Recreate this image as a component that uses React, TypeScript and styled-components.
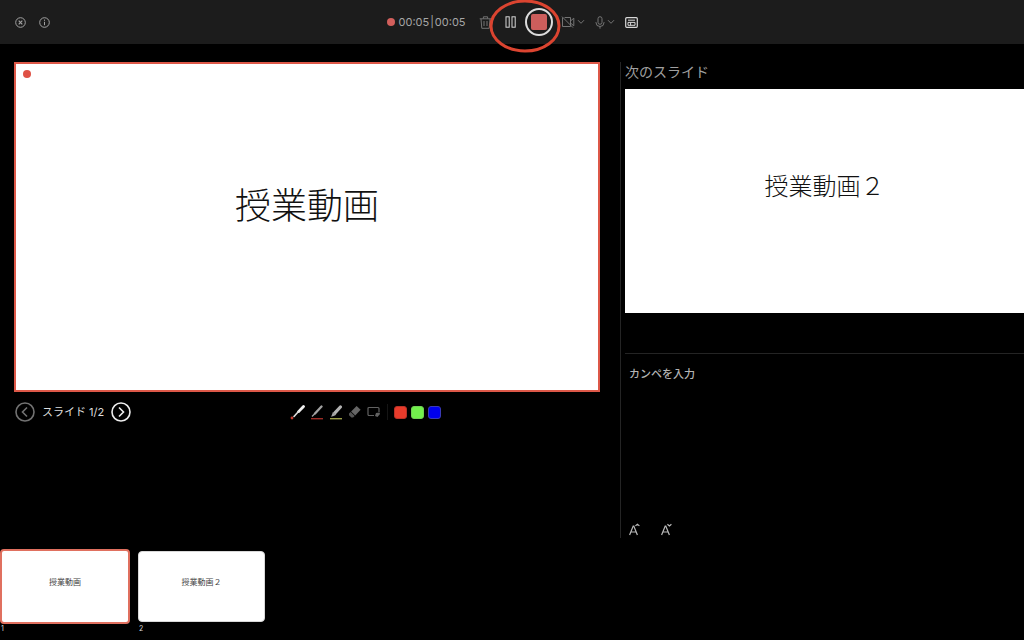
import React from "react";
import styled, { createGlobalStyle } from "styled-components";

const GlobalStyle = createGlobalStyle`
  * { box-sizing: border-box; }
  body {
    margin: 0;
    background: #000;
    color: #d8d8d8;
    font-family: Inter, "Noto Sans CJK JP", sans-serif;
  }
`;

const Page = styled.div`
  display: flex;
  flex-direction: column;
  min-height: 100vh;
`;

const TopBar = styled.header`
  display: grid;
  grid-template-columns: 1fr auto 1fr;
  align-items: center;
  height: 44px;
  padding: 0 15px;
  background: #1c1c1c;
`;

const Group = styled.div<{ $gap: number }>`
  display: flex;
  align-items: center;
  gap: ${(p) => p.$gap}px;
`;

const IconButton = styled.button<{ $color?: string }>`
  display: flex;
  align-items: center;
  padding: 0;
  border: 0;
  background: none;
  color: ${(p) => p.$color ?? "#d8d8d8"};
  cursor: pointer;
  svg { display: block; }
`;

const Recorder = styled.div`
  position: relative;
  display: flex;
  align-items: center;
`;

const Dot = styled.span`
  width: 8px;
  height: 8px;
  border-radius: 50%;
  background: #d25f5c;
`;

const Timer = styled.span`
  display: flex;
  gap: 1px;
  width: 66px;
  margin: 0 14px 0 4px;
  font-size: 11px;
  line-height: 16px;
  color: #a6a6a6;
  white-space: nowrap;
`;

const Controls = styled.div`
  position: relative;
  display: flex;
  align-items: center;
  gap: 8px;
  margin: 0 8px 0 13px;
`;

const StopButton = styled.button`
  display: grid;
  place-items: center;
  width: 28px;
  height: 28px;
  padding: 0;
  border: 2px solid #dcdcdc;
  border-radius: 50%;
  background: none;
  cursor: pointer;
`;

const StopMark = styled.span`
  width: 16px;
  height: 16px;
  border-radius: 2px;
  background: #cd5e5c;
`;

const Highlight = styled.svg`
  position: absolute;
  left: -16px;
  top: -10px;
  pointer-events: none;
`;

const Main = styled.main`
  display: grid;
  grid-template-columns: minmax(0, 586fr) minmax(0, 404fr);
  gap: 20px;
  padding: 18px 0 0 14px;
`;

const Column = styled.section`
  display: flex;
  flex-direction: column;
`;

const CurrentSlide = styled.div`
  position: relative;
  display: flex;
  justify-content: center;
  aspect-ratio: 586 / 330;
  padding-top: calc(20% + 4px);
  border: 2px solid #dd5848;
  background: #fff;
`;

const RecordingMark = styled.span`
  position: absolute;
  left: 7px;
  top: 6px;
  width: 8px;
  height: 8px;
  border-radius: 50%;
  background: #df5145;
`;

const SlideTitle = styled.h1<{ $size: number }>`
  margin: 0;
  color: #111;
  font-family: "Noto Sans CJK JP", sans-serif;
  font-size: ${(p) => p.$size}px;
  font-weight: 300;
  line-height: 1;
  white-space: nowrap;
`;

const SlideBar = styled.div`
  display: flex;
  align-items: center;
  height: 40px;
  padding: 0 1px;
`;

const InkTools = styled.div`
  display: flex;
  align-items: center;
  gap: 4px;
  margin: 0 auto;
`;

const Counter = styled.span`
  font-size: 11px;
  line-height: 16px;
  color: #dedede;
`;

const ToolDivider = styled.span`
  width: 1px;
  height: 16px;
  margin: 0 2px;
  background: #151515;
`;

const Swatch = styled.button<{ $color: string; $edge: string }>`
  width: 13px;
  height: 13px;
  padding: 0;
  border: 1px solid ${(p) => p.$edge};
  border-radius: 3px;
  background: ${(p) => p.$color};
  cursor: pointer;
`;

const Side = styled(Column)`
  min-height: 476px;
  padding-left: 4px;
  border-left: 1px solid #242424;
`;

const SideHeading = styled.h2`
  margin: 0 0 7px;
  font-size: 14px;
  font-weight: 400;
  line-height: 20px;
  color: #a0a0a0;
`;

const NextSlide = styled.div`
  display: flex;
  justify-content: center;
  aspect-ratio: 399 / 224;
  padding-top: 21%;
  background: #fff;
`;

const Notes = styled.div`
  display: flex;
  flex: 1;
  flex-direction: column;
  margin-top: 40px;
  padding: 12px 4px 2px;
  border-top: 1px solid #242424;
`;

const NotesInput = styled.textarea`
  flex: 1;
  padding: 0;
  border: 0;
  outline: 0;
  resize: none;
  background: none;
  color: #b4b4b4;
  font: 500 11px/16px Inter, "Noto Sans CJK JP", sans-serif;
  &::placeholder { color: #b4b4b4; opacity: 1; }
`;

const Strip = styled.nav`
  display: flex;
  gap: 8px;
  margin-top: 11px;
`;

const Thumb = styled.button`
  padding: 0;
  border: 0;
  background: none;
  text-align: left;
  cursor: pointer;
`;

const ThumbPage = styled.span<{ $active?: boolean }>`
  display: flex;
  justify-content: center;
  width: ${(p) => (p.$active ? 130 : 127)}px;
  height: ${(p) => (p.$active ? 75 : 71)}px;
  margin: ${(p) => (p.$active ? 0 : 2)}px 0;
  padding-top: ${(p) => (p.$active ? 27 : 26)}px;
  border: ${(p) => (p.$active ? "2px solid #e0705f" : "1px solid #d8d8d8")};
  border-radius: 4px;
  background: #fff;
  color: #444;
  font-family: "Noto Sans CJK JP", sans-serif;
  font-size: 8px;
  line-height: 8px;
`;

const ThumbNumber = styled.span`
  display: block;
  padding: 0 1px;
  font-family: Inter, sans-serif;
  font-size: 7px;
  line-height: 10px;
  color: #d8d8d8;
`;

const Chevron = () => (
  <svg width="8" height="6" viewBox="0 0 8 6" fill="none" stroke="currentColor">
    <path d="M1 1.2 4 4.3 7 1.2" />
  </svg>
);

const CircleArrow = ({ next }: { next?: boolean }) => (
  <svg width="20" height="20" viewBox="0 0 20 20" fill="none" stroke="currentColor" strokeWidth="1.6">
    <circle cx="10" cy="10" r="9" />
    <path d={next ? "M8 5.5 12.5 10 8 14.5" : "M12 5.5 7.5 10 12 14.5"} />
  </svg>
);

const FontSize = ({ up }: { up?: boolean }) => (
  <svg width="12" height="13" viewBox="0 0 12 13" fill="none" stroke="currentColor">
    <path d="M.6 12 4.2 3h.6L8.4 12M2 9h5" strokeWidth="1.2" />
    <path d={up ? "M6.4 2.9 8.4 1.3l2 1.6" : "M6.4 1.3l2 1.6 2-1.6"} strokeWidth="1.2" />
  </svg>
);

export default function App() {
  return (
    <>
      <GlobalStyle />
      <Page>
        <TopBar>
          <Group $gap={13}>
            <IconButton aria-label="閉じる" $color="#a2a2a2">
              <svg width="11" height="11" viewBox="0 0 11 11" fill="none" stroke="currentColor">
                <circle cx="5.5" cy="5.5" r="4.8" />
                <path d="m3.7 3.7 3.6 3.6m0-3.6L3.7 7.3" strokeWidth="1.2" />
              </svg>
            </IconButton>
            <IconButton aria-label="情報" $color="#a2a2a2">
              <svg width="11" height="11" viewBox="0 0 11 11" fill="none" stroke="currentColor">
                <circle cx="5.5" cy="5.5" r="4.8" />
                <path d="M5.5 4.8v3.4M5.5 2.6v1.2" />
              </svg>
            </IconButton>
          </Group>
          <Recorder>
            <Dot />
            <Timer><span>00:05</span><span>|</span><span>00:05</span></Timer>
            <IconButton aria-label="削除" $color="#747474">
              <svg width="13" height="13" viewBox="0 0 13 13" fill="none" stroke="currentColor">
                <path d="M.7 2.8h11.6M4.4 2.6V.8h4.2v1.8M2 3l.8 9.3h7.4L11 3M5 5v5M8 5v5" />
              </svg>
            </IconButton>
            <Controls>
              <IconButton aria-label="一時停止">
                <svg width="12" height="12" viewBox="0 0 12 12" fill="none" stroke="currentColor">
                  <rect x="1" y=".8" width="3.2" height="10.4" />
                  <rect x="7" y=".8" width="3.2" height="10.4" />
                </svg>
              </IconButton>
              <StopButton aria-label="停止"><StopMark /></StopButton>
              <Highlight width="72" height="58" viewBox="0 0 72 58" fill="none" stroke="#db4430" strokeWidth="3" aria-hidden="true">
                <ellipse cx="36" cy="28" rx="34" ry="25" />
              </Highlight>
            </Controls>
            <Group $gap={10}>
              <Group $gap={2}>
                <IconButton aria-label="カメラ" $color="#747474">
                  <svg width="14" height="12" viewBox="0 0 14 12" fill="none" stroke="currentColor">
                    <path d="M3.6 1.5h5.9v9H1.5v-9M9.5 5l3.3-2.8v7.6L9.5 7M1 .6l11 11" />
                  </svg>
                </IconButton>
                <IconButton aria-label="カメラの選択" $color="#747474"><Chevron /></IconButton>
              </Group>
              <Group $gap={2}>
                <IconButton aria-label="マイク" $color="#747474">
                  <svg width="10" height="13" viewBox="0 0 10 13" fill="none" stroke="currentColor">
                    <rect x="3" y=".7" width="4" height="7.6" rx="2" />
                    <path d="M1 6v.5a4 4 0 0 0 8 0V6M5 10.5v2.2" />
                  </svg>
                </IconButton>
                <IconButton aria-label="マイクの選択" $color="#747474"><Chevron /></IconButton>
              </Group>
              <IconButton aria-label="表示の切り替え">
                <svg width="13" height="11" viewBox="0 0 13 11" fill="none" stroke="currentColor">
                  <rect x=".7" y=".7" width="11.6" height="9.6" rx="1" strokeWidth="1.2" />
                  <path d="M3 3.2h7M3 5.4h7v2.9H3zM5.6 5.4v2.9" />
                </svg>
              </IconButton>
            </Group>
          </Recorder>
        </TopBar>
        <Main>
          <Column>
            <CurrentSlide>
              <RecordingMark />
              <SlideTitle $size={36}>授業動画</SlideTitle>
            </CurrentSlide>
            <SlideBar>
              <Group $gap={7}>
                <IconButton aria-label="前のスライド" $color="#727272"><CircleArrow /></IconButton>
                <Counter>スライド 1/2</Counter>
                <IconButton aria-label="次のスライド" $color="#ededed"><CircleArrow next /></IconButton>
              </Group>
              <InkTools>
                <Group $gap={5}>
                  <IconButton aria-label="レーザーポインター">
                    <svg width="15" height="15" viewBox="0 0 15 15" fill="none">
                      <path d="M13.5 1.5 8.6 6.6" stroke="#f0f0f0" strokeWidth="2.8" strokeLinecap="round" />
                      <path d="m8.5 6.5-4.5 5" stroke="#ddd" strokeWidth="1.6" strokeLinecap="round" />
                      <circle cx="2" cy="13" r="1.4" fill="#c63c31" />
                    </svg>
                  </IconButton>
                  <IconButton aria-label="ペン">
                    <svg width="14" height="15" viewBox="0 0 14 15" fill="none">
                      <path d="M11.5 1.5 5 8.5" stroke="#a2a2a2" strokeWidth="2.3" strokeLinecap="round" />
                      <path d="m5 8.5-3 3" stroke="#a2a2a2" strokeWidth="1.2" />
                      <path d="M1 13.7h12" stroke="#9c2b25" strokeWidth="1.4" />
                    </svg>
                  </IconButton>
                  <IconButton aria-label="蛍光ペン">
                    <svg width="14" height="15" viewBox="0 0 14 15" fill="none">
                      <path d="M11.4 2 6.4 7.4" stroke="#b2b2b2" strokeWidth="3.2" strokeLinecap="round" />
                      <path d="m4 6.7 3.3 3-2.5 1.2-2.7.8 1-2.5z" fill="#a2a2a2" />
                      <path d="M1 13.7h12" stroke="#9c9f48" strokeWidth="1.4" />
                    </svg>
                  </IconButton>
                  <IconButton aria-label="消しゴム" $color="#666">
                    <svg width="14" height="14" viewBox="0 0 14 14">
                      <path d="m8.6 1 4 3.8-5.4 5.6-4.1-4z" fill="currentColor" />
                      <path d="m2.6 6.9 4.1 4-1.6 1.7H3.4L1 10.2V8.5z" fill="#555" />
                    </svg>
                  </IconButton>
                  <IconButton aria-label="インクの選択" $color="#626262">
                    <svg width="14" height="12" viewBox="0 0 14 12" fill="none" stroke="currentColor">
                      <path d="M7 9.5H2a1 1 0 0 1-1-1v-6a1 1 0 0 1 1-1h9a1 1 0 0 1 1 1V6" strokeWidth="1.2" />
                      <path d="m9 7 3.5-.5L13 8l-2.5 3L8 10z" fill="currentColor" stroke="none" />
                    </svg>
                  </IconButton>
                </Group>
                <ToolDivider />
                <Swatch aria-label="赤" $color="#e83b2b" $edge="#b83227" />
                <Swatch aria-label="緑" $color="#72f04c" $edge="#70cf53" />
                <Swatch aria-label="青" $color="#0000ed" $edge="#3b3bb4" />
              </InkTools>
            </SlideBar>
          </Column>
          <Side>
            <SideHeading>次のスライド</SideHeading>
            <NextSlide><SlideTitle as="p" $size={24}>授業動画２</SlideTitle></NextSlide>
            <Notes>
              <NotesInput aria-label="カンペ" placeholder="カンペを入力" />
              <Group $gap={20}>
                <IconButton aria-label="文字を大きく" $color="#bababa"><FontSize up /></IconButton>
                <IconButton aria-label="文字を小さく" $color="#bababa"><FontSize /></IconButton>
              </Group>
            </Notes>
          </Side>
        </Main>
        <Strip aria-label="スライド一覧">
          <Thumb><ThumbPage $active>授業動画</ThumbPage><ThumbNumber>1</ThumbNumber></Thumb>
          <Thumb><ThumbPage>授業動画２</ThumbPage><ThumbNumber>2</ThumbNumber></Thumb>
        </Strip>
      </Page>
    </>
  );
}
